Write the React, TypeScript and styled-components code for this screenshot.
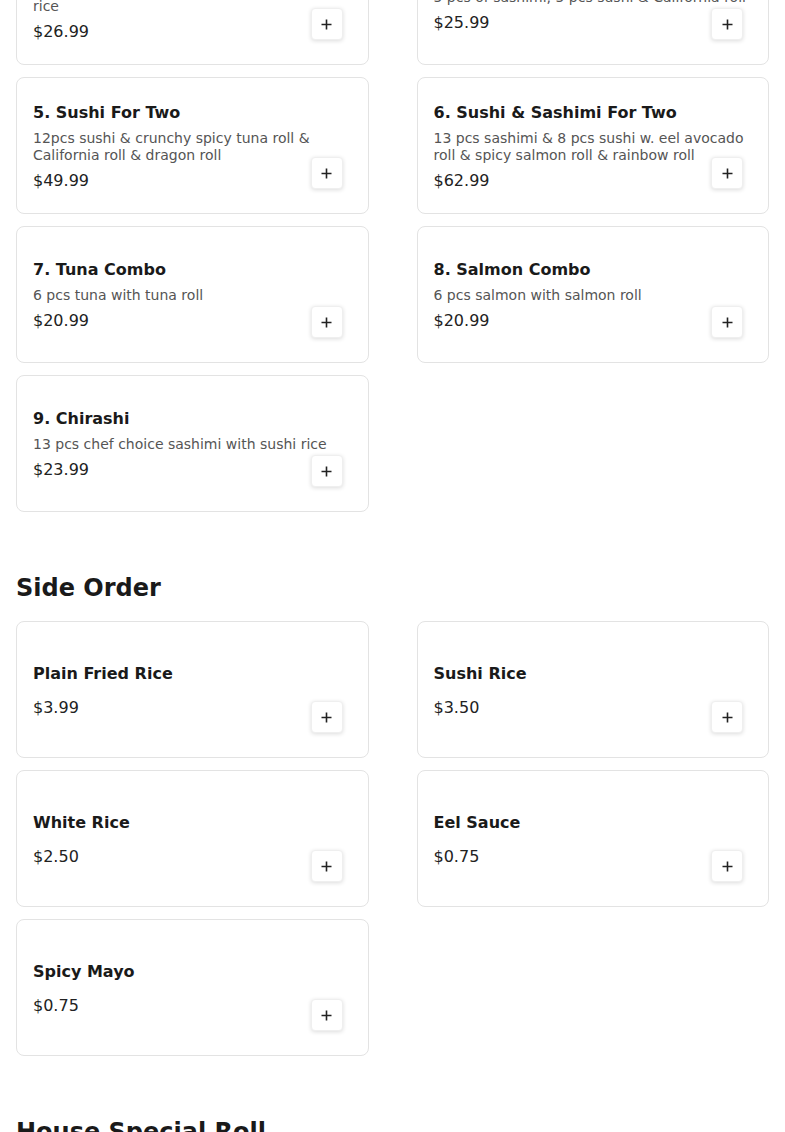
import React from "react";
import styled, { createGlobalStyle } from "styled-components";

const GlobalStyle = createGlobalStyle`
  html, body {
    margin: 0;
    padding: 0;
    background: #ffffff;
  }
  body {
    font-family: "DejaVu Sans", "Liberation Sans", sans-serif;
    color: #1a1a1a;
    overflow: hidden;
  }
  * { box-sizing: border-box; }
`;

type Item = { name: string; desc?: string; price: string };

const combo: Item[] = [
  { name: "1. Sushi Regular", desc: "7 pcs sushi & California roll", price: "$21.99" },
  { name: "2. Sashimi Regular", desc: "12 pcs chef choice sashimi", price: "$24.99" },
  { name: "3. Sashimi Deluxe", desc: "18 pcs chef choice sashimi, tuna roll & sushi rice", price: "$26.99" },
  { name: "4. Sushi & Sashimi Combo", desc: "5 pcs of sashimi, 5 pcs sushi & California roll", price: "$25.99" },
  { name: "5. Sushi For Two", desc: "12pcs sushi & crunchy spicy tuna roll & California roll & dragon roll", price: "$49.99" },
  { name: "6. Sushi & Sashimi For Two", desc: "13 pcs sashimi & 8 pcs sushi w. eel avocado roll & spicy salmon roll & rainbow roll", price: "$62.99" },
  { name: "7. Tuna Combo", desc: "6 pcs tuna with tuna roll", price: "$20.99" },
  { name: "8. Salmon Combo", desc: "6 pcs salmon with salmon roll", price: "$20.99" },
  { name: "9. Chirashi", desc: "13 pcs chef choice sashimi with sushi rice", price: "$23.99" },
];

const sides: Item[] = [
  { name: "Plain Fried Rice", price: "$3.99" },
  { name: "Sushi Rice", price: "$3.50" },
  { name: "White Rice", price: "$2.50" },
  { name: "Eel Sauce", price: "$0.75" },
  { name: "Spicy Mayo", price: "$0.75" },
];

const houseSpecial: Item[] = [
  { name: "Dragon Roll", desc: "Shrimp tempura, cucumber topped with eel & avocado", price: "$15.99" },
  { name: "Rainbow Roll", desc: "California roll topped with assorted fish", price: "$14.99" },
];

const Page = styled.main`
  display: flex;
  flex-direction: column;
  gap: 59px;
  padding: 0 16px 40px;
  margin-top: -271px;
`;

const Section = styled.section`
  display: flex;
  flex-direction: column;
  gap: 16px;
`;

const Heading = styled.h2`
  margin: 0;
  font-size: 24px;
  line-height: 34px;
  font-weight: 700;
  color: #1a1a1a;
`;

const Grid = styled.div`
  display: grid;
  grid-template-columns: 1fr 1fr;
  column-gap: 48px;
  row-gap: 12px;
`;

const Card = styled.div`
  position: relative;
  min-height: 137px;
  border: 1px solid #e3e3e3;
  border-radius: 8px;
  background: #ffffff;
  padding: 17px 16px 15px;
  display: flex;
  flex-direction: column;
  justify-content: center;
`;

const Title = styled.h3`
  margin: 0 0 5px;
  font-size: 16px;
  line-height: 24px;
  font-weight: 700;
  color: #1a1a1a;
`;

const Desc = styled.p`
  margin: 0;
  font-size: 14px;
  line-height: 17px;
  color: #555555;
`;

const Price = styled.div`
  margin-top: 5px;
  font-size: 16px;
  line-height: 24px;
  color: #222222;
`;

const AddButton = styled.button`
  position: absolute;
  right: 25px;
  bottom: 24px;
  width: 32px;
  height: 32px;
  padding: 0;
  border: 1px solid #efefef;
  border-radius: 4px;
  background: #ffffff;
  box-shadow: 0 1px 4px rgba(0, 0, 0, 0.14);
  display: flex;
  align-items: center;
  justify-content: center;
  color: #222222;
  cursor: pointer;
`;

const PlusIcon = () => (
  <svg width="11" height="11" viewBox="0 0 11 11" aria-hidden="true">
    <path d="M5.5 0.5v10M0.5 5.5h10" stroke="currentColor" strokeWidth="1.6" fill="none" />
  </svg>
);

const MenuCard: React.FC<{ item: Item }> = ({ item }) => (
  <Card>
    <Title>{item.name}</Title>
    {item.desc && <Desc>{item.desc}</Desc>}
    <Price>{item.price}</Price>
    <AddButton aria-label={`Add ${item.name}`}>
      <PlusIcon />
    </AddButton>
  </Card>
);

const MenuSection: React.FC<{ title: string; items: Item[] }> = ({ title, items }) => (
  <Section>
    <Heading>{title}</Heading>
    <Grid>
      {items.map((it) => (
        <MenuCard key={it.name} item={it} />
      ))}
    </Grid>
  </Section>
);

export default function App() {
  return (
    <>
      <GlobalStyle />
      <Page>
        <MenuSection title="Combo" items={combo} />
        <MenuSection title="Side Order" items={sides} />
        <MenuSection title="House Special Roll" items={houseSpecial} />
      </Page>
    </>
  );
}
